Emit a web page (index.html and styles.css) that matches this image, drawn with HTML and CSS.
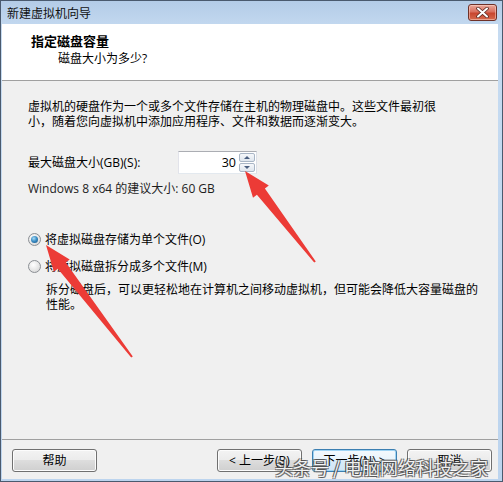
FILE: index.html
```html
<!DOCTYPE html>
<html lang="zh-CN">
<head>
<meta charset="utf-8">
<title>新建虚拟机向导</title>
<link rel="stylesheet" href="styles.css">
</head>
<body>
<div class="window">
  <div class="titlebar">
    <span class="title">新建虚拟机向导</span>
    <div class="close">
      <svg width="13" height="11" viewBox="0 0 13 11">
        <path d="M2 1.5 L11 9.5 M11 1.5 L2 9.5" stroke="#5a2a22" stroke-width="3.6" stroke-linecap="round"/>
        <path d="M2 1.5 L11 9.5 M11 1.5 L2 9.5" stroke="#ffffff" stroke-width="2" stroke-linecap="round"/>
      </svg>
    </div>
  </div>
  <div class="frame">
    <div class="header">
      <div class="h-title">指定磁盘容量</div>
      <div class="h-sub">磁盘大小为多少?</div>
    </div>
    <div class="content">
      <p class="intro">虚拟机的硬盘作为一个或多个文件存储在主机的物理磁盘中。这些文件最初很<br>小，随着您向虚拟机中添加应用程序、文件和数据而逐渐变大。</p>
      <div class="size-row">
        <span class="label">最大磁盘大小(GB)(S):</span>
        <div class="spin">
          <div class="spin-input">30</div>
          <div class="spin-btns">
            <div class="sb"><span class="tri-up"></span></div>
            <div class="sb"><span class="tri-down"></span></div>
          </div>
        </div>
      </div>
      <div class="rec">Windows 8 x64 的建议大小: 60 GB</div>
      <div class="radio-row first"><span class="radio checked"></span><span>将虚拟磁盘存储为单个文件(O)</span></div>
      <div class="radio-row second"><span class="radio"></span><span>将虚拟磁盘拆分成多个文件(M)</span></div>
      <p class="desc">拆分磁盘后，可以更轻松地在计算机之间移动虚拟机，但可能会降低大容量磁盘的<br>性能。</p>
    </div>
    <div class="footer">
      <div class="btn">帮助</div>
      <div class="btn-group">
        <div class="btn">&lt; 上一步(B)</div>
        <div class="btn focused">下一步(N) &gt;</div>
        <div class="btn">取消</div>
      </div>
    </div>
  </div>
  <svg class="arrows" width="503" height="482" viewBox="0 0 503 482">
    <polygon fill="#ec3b36" points="245,171 268.8,185.5 264.9,188.6 315.8,261.4 314.2,262.6 256.9,194.7 253,197.7"/>
    <polygon fill="#ec3b36" points="46,245 69.7,259.5 65.8,262.6 132.8,356.4 131.2,357.6 57.8,268.7 53.9,271.7"/>
  </svg>
  <div class="watermark">头条号 / 电脑网络科技之家</div>
</div>
</body>
</html>
```
FILE: styles.css
```css
* { box-sizing: border-box; }
html, body { margin: 0; padding: 0; }
body {
  font-family: "Open Sans", "Noto Sans CJK SC", sans-serif;
  font-size: 12px;
  color: #000;
  background: #fff;
}
.window {
  position: relative;
  width: 503px;
  height: 482px;
  border: 1px solid #4a5a6e;
  background: linear-gradient(#b3cce7, #c6dbf1 30px, #bcd4ee);
  display: flex;
  flex-direction: column;
  overflow: hidden;
}
.titlebar {
  height: 23px;
  display: flex;
  align-items: flex-start;
  justify-content: space-between;
  flex-shrink: 0;
}
.title {
  padding: 5px 0 0 6px;
  line-height: 16px;
  color: #111;
}
.close {
  margin: 3px 5px 0 0;
  width: 29px;
  height: 17px;
  border: 1px solid #6e3128;
  border-radius: 3px;
  background: linear-gradient(#eaa89a, #d9705f 45%, #c8462f 55%, #d66a4d);
  box-shadow: inset 0 0 0 1px rgba(255, 220, 210, 0.5);
  display: flex;
  align-items: center;
  justify-content: center;
}
.close svg { display: block; }
.frame {
  flex: 1;
  margin: 0 4px 2px 1px;
  background: #f0f0f0;
  display: flex;
  flex-direction: column;
}
.header {
  height: 57px;
  background: #fff;
  border-bottom: 1px solid #a0a0a0;
  padding: 9px 0 0 29px;
}
.h-title {
  font-weight: bold;
  font-size: 13px;
  line-height: 16px;
}
.h-sub {
  margin: 2px 0 0 27px;
  line-height: 16px;
}
.content {
  flex: 1;
  padding: 0 0 0 26px;
}
.intro {
  margin: 18px 0 0 0;
  line-height: 15px;
}
.size-row {
  margin-top: 22px;
  display: flex;
  align-items: center;
  height: 23px;
}
.label {
  width: 150px;
  line-height: 15px;
}
.spin {
  width: 79px;
  height: 23px;
  border: 1px solid #abadb3;
  border-right-color: #dbdfe6;
  border-bottom-color: #e3e9ef;
  border-left-color: #e2e3ea;
  background: #fff;
  display: flex;
}
.spin-input {
  flex: 1;
  text-align: right;
  padding-right: 3px;
  line-height: 21px;
  font-size: 12.5px;
}
.spin-btns {
  width: 17px;
  display: flex;
  flex-direction: column;
  gap: 1px;
  padding: 1px 1px 1px 0;
}
.sb {
  flex: 1;
  border: 1px solid #a9b6c6;
  border-radius: 2px;
  background: linear-gradient(#f6f8fb, #dfe6ee);
  display: flex;
  align-items: center;
  justify-content: center;
}
.tri-up, .tri-down {
  width: 0;
  height: 0;
  border-left: 3px solid transparent;
  border-right: 3px solid transparent;
}
.tri-up { border-bottom: 3px solid #4a5f80; }
.tri-down { border-top: 3px solid #4a5f80; }
.rec {
  margin-top: 7px;
  line-height: 15px;
  color: #1e1e1e;
}
.radio-row {
  display: flex;
  align-items: center;
  gap: 4px;
  line-height: 15px;
}
.radio-row.first { margin-top: 36px; }
.radio-row.second { margin-top: 12px; }
.radio {
  width: 13px;
  height: 13px;
  border-radius: 50%;
  border: 1px solid #8b8f94;
  background: radial-gradient(circle at 40% 35%, #ffffff, #e6e6e6 55%, #cfcfcf);
  display: flex;
  align-items: center;
  justify-content: center;
  flex-shrink: 0;
}
.radio.checked::after {
  content: "";
  width: 7px;
  height: 7px;
  border-radius: 50%;
  background: radial-gradient(circle at 40% 35%, #a8dcf7, #3d8fc6 45%, #114e80);
}
.desc {
  margin: 8px 0 0 18px;
  line-height: 15px;
}
.footer {
  border-top: 1px solid #a0a0a0;
  padding: 9px 6px 7px 10px;
  display: flex;
  justify-content: space-between;
}
.btn-group {
  display: flex;
  gap: 10px;
}
.btn {
  width: 85px;
  height: 23px;
  border: 1px solid #707070;
  border-radius: 3px;
  background: linear-gradient(#f3f3f3, #ebebeb 50%, #dddddd 50%, #cfcfcf);
  box-shadow: inset 0 0 0 1px #fcfcfc;
  display: flex;
  align-items: center;
  justify-content: center;
  line-height: 15px;
}
.btn.focused {
  border-color: #3c7fb1;
  background: linear-gradient(#f4f9fd, #e8f3fb 50%, #d9ecf9 50%, #cfe6f7);
  box-shadow: inset 0 0 0 1px #9fd4f4;
}
.arrows {
  position: absolute;
  left: -1px;
  top: -1px;
  pointer-events: none;
}
.watermark {
  position: absolute;
  left: 274px;
  top: 455px;
  font-size: 18px;
  line-height: 22px;
  white-space: nowrap;
  font-family: "Noto Sans CJK SC", sans-serif;
  color: rgba(255, 255, 255, 0.92);
  text-shadow: 1px 1px 0 rgba(70, 70, 70, 0.7), -1px -1px 0 rgba(70, 70, 70, 0.7), 1px -1px 0 rgba(70, 70, 70, 0.7), -1px 1px 0 rgba(70, 70, 70, 0.7);
}
```
